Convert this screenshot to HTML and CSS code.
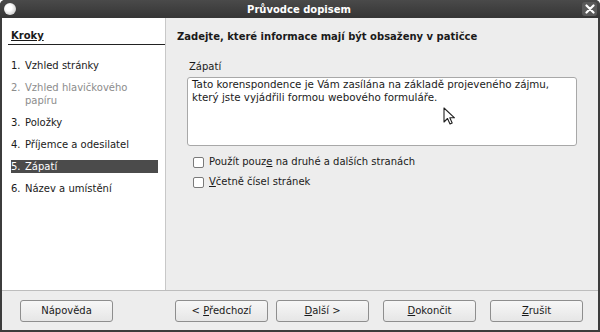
FILE: index.html
```html
<!DOCTYPE html>
<html lang="cs">
<head>
  <meta charset="UTF-8">
  <title>Průvodce dopisem</title>
  <link rel="stylesheet" href="styles.css">
</head>
<body>
  <div class="window">
    <div class="titlebar">
      <span class="app-icon"></span>
      <span class="title">Průvodce dopisem</span>
      <span class="close">
        <svg width="10" height="10" viewBox="0 0 10 10"><path d="M1.5 1.5 L8.5 8.5 M8.5 1.5 L1.5 8.5" stroke="#fff" stroke-width="2.2" stroke-linecap="round"/></svg>
      </span>
    </div>
    <div class="frame">
      <div class="content">
        <div class="steps">
          <div class="steps-title">Kroky</div>
          <ul class="step-list">
            <li><span class="num">1.</span><span>Vzhled stránky</span></li>
            <li class="disabled"><span class="num">2.</span><span>Vzhled hlavičkového papíru</span></li>
            <li><span class="num">3.</span><span>Položky</span></li>
            <li><span class="num">4.</span><span>Příjemce a odesilatel</span></li>
            <li class="active"><span class="num">5.</span><span>Zápatí</span></li>
            <li><span class="num">6.</span><span>Název a umístění</span></li>
          </ul>
        </div>
        <div class="page">
          <div class="page-title">Zadejte, které informace mají být obsaženy v patičce</div>
          <div class="field-label">Zápatí</div>
          <div class="textbox">Tato korenspondence je Vám zasílána na základě projeveného zájmu,<br>který jste vyjádřili formou webového formuláře.<svg class="cursor" width="13" height="19" viewBox="0 0 13 19"><path d="M1 1 L1 15 L4.5 11.5 L7 17 L9.2 16 L6.8 10.8 L11.5 10.8 Z" fill="#fff" stroke="#222" stroke-width="1.1" stroke-linejoin="round"/></svg></div>
          <label class="check"><span class="box"></span><span>Použít pouz<u>e</u> na druhé a dalších stranách</span></label>
          <label class="check"><span class="box"></span><span><u>V</u>četně čísel stránek</span></label>
        </div>
      </div>
      <div class="buttons">
        <button class="btn">Nápověda</button>
        <div class="nav">
          <button class="btn">&lt; <u>P</u>ředchozí</button>
          <button class="btn"><u>D</u>alší &gt;</button>
          <button class="btn wide"><u>D</u>okončit</button>
          <button class="btn wide"><u>Z</u>rušit</button>
        </div>
      </div>
    </div>
  </div>
</body>
</html>
```

FILE: styles.css
```css
html, body {
  margin: 0;
  padding: 0;
  background: #fff;
}
body {
  font-family: "DejaVu Sans", sans-serif;
  font-size: 10px;
  color: #1a1a1a;
}
.window {
  width: 600px;
  height: 332px;
  display: flex;
  flex-direction: column;
  background: #3c3c3c;
  border-radius: 5px 5px 0 0;
  overflow: hidden;
}
.titlebar {
  height: 18px;
  display: flex;
  align-items: center;
  background: linear-gradient(#4a4a4a, #353535);
}
.app-icon {
  width: 12px;
  height: 12px;
  margin-left: 4px;
  border-radius: 50%;
  background: radial-gradient(circle at 40% 40%, #ffffff 30%, #c9c9c9 80%);
}
.title {
  flex: 1;
  text-align: center;
  color: #fff;
  font-weight: bold;
  font-size: 10px;
}
.close {
  width: 15px;
  height: 14px;
  margin-right: 3px;
  border-radius: 3px;
  background: #5a5a5a;
  display: flex;
  align-items: center;
  justify-content: center;
}
.frame {
  flex: 1;
  margin: 0 2px 2px;
  background: #ededed;
  display: flex;
  flex-direction: column;
}
.content {
  display: flex;
  height: 272px;
  border-bottom: 1px solid #bdbdbd;
}
.steps {
  width: 164px;
  background: #fff;
  border-right: 1px solid #c8c8c8;
  padding: 11px 0 0 6px;
  box-sizing: border-box;
}
.steps-title {
  font-weight: bold;
  text-decoration: underline;
  text-underline-offset: 1px;
  padding: 0 0 1px 3px;
  border-bottom: 1px solid #222;
  line-height: 14px;
}
.step-list {
  list-style: none;
  margin: 14px 0 0 3px;
  padding: 0;
}
.step-list li {
  display: flex;
  line-height: 13px;
  margin-bottom: 9px;
  width: 147px;
}
.step-list .num {
  width: 14px;
  flex: none;
}
.step-list li.disabled {
  color: #8c8c8c;
}
.step-list li.active {
  background: #4b4b4b;
  color: #fff;
  height: 13px;
}
.page {
  flex: 1;
  padding: 12px 0 0 11px;
}
.page-title {
  font-weight: bold;
  line-height: 14px;
}
.field-label {
  margin: 17px 0 0 12px;
  line-height: 12px;
}
.textbox {
  position: relative;
  margin: 4px 0 0 10px;
  width: 390px;
  height: 69px;
  box-sizing: border-box;
  background: #fff;
  border: 1px solid #a8a8a8;
  border-radius: 3px;
  padding: 0 4px;
  line-height: 13px;
  font-size: 10.3px;
}
.cursor {
  position: absolute;
  left: 255px;
  top: 29px;
}
.check {
  display: flex;
  align-items: center;
  margin: 9px 0 0 16px;
  line-height: 14px;
}
.check + .check {
  margin-top: 6px;
}
.box {
  width: 9px;
  height: 9px;
  border: 1px solid #7a7a7a;
  border-radius: 2px;
  background: #fff;
  margin-right: 5px;
}
.buttons {
  flex: 1;
  display: flex;
  align-items: center;
  padding: 0 15px 0 18px;
  justify-content: space-between;
}
.nav {
  display: flex;
  gap: 8px;
}
.nav .wide {
  margin-left: 6px;
}
.btn {
  width: 93px;
  height: 22px;
  font-family: "DejaVu Sans", sans-serif;
  font-size: 10px;
  color: #1a1a1a;
  background: linear-gradient(#f7f7f7, #e6e6e6);
  border: 1px solid #8e8e8e;
  border-radius: 3px;
  padding: 0;
}
```
